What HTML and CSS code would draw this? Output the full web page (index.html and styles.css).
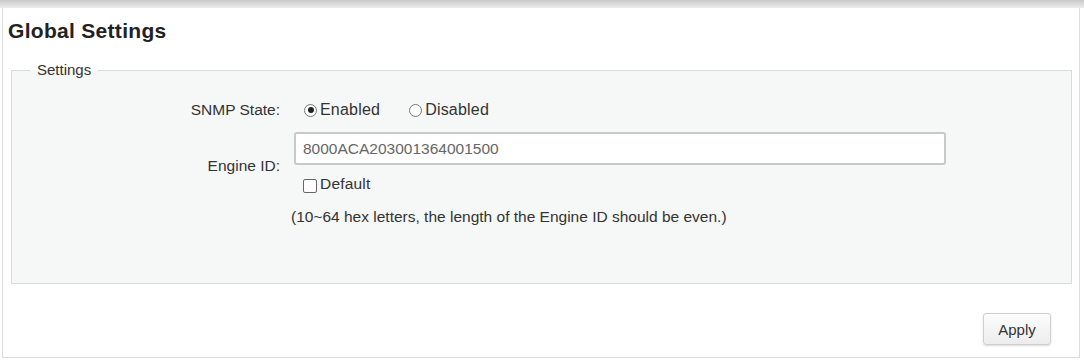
FILE: index.html
```html
<!DOCTYPE html>
<html>
<head>
<meta charset="utf-8">
<link rel="stylesheet" href="styles.css">
</head>
<body>
<div class="shade"></div>
<div class="page">
  <h1 class="title">Global Settings</h1>
  <fieldset class="group">
    <legend class="legend">Settings</legend>
    <div class="row row-state">
      <div class="label">SNMP State:</div>
      <div class="controls">
        <label class="opt"><span class="radio on"></span>Enabled</label>
        <label class="opt"><span class="radio"></span>Disabled</label>
      </div>
    </div>
    <div class="row row-engine">
      <div class="label">Engine ID:</div>
      <div class="controls col">
        <div class="input">8000ACA203001364001500</div>
        <label class="opt chk"><span class="box"></span>Default</label>
      </div>
    </div>
    <div class="row row-hint">
      <div class="label"></div>
      <div class="hint">(10~64 hex letters, the length of the Engine ID should be even.)</div>
    </div>
  </fieldset>
  <div class="actions">
    <div class="btn">Apply</div>
  </div>
</div>
</body>
</html>
```

FILE: styles.css
```css
html, body {
  margin: 0;
  padding: 0;
  background: #ffffff;
  font-family: "Liberation Sans", Arial, sans-serif;
  color: #333;
}
.shade {
  height: 8px;
  background: linear-gradient(#c9c9c9, #ececec);
}
.page {
  margin: 0 4px 0 2px;
  border-left: 1px solid #dcdcdc;
  border-right: 1px solid #dcdcdc;
  border-bottom: 1px solid #dcdcdc;
  height: 350px;
  box-sizing: border-box;
  padding-top: 11px;
}
.title {
  margin: 0 0 0 5px;
  font-size: 21px;
  font-weight: bold;
  color: #222;
  line-height: 24px;
  letter-spacing: 0.3px;
}
.group {
  margin: 18px 7px 0 8px;
  padding: 0;
  border: 1px solid #d8dcdc;
  background: #f6f7f7;
  height: 223px;
  box-sizing: border-box;
}
.legend {
  margin-left: 18px;
  padding: 0 7px;
  font-size: 15px;
  line-height: 18px;
  color: #333;
}
.row {
  display: flex;
  align-items: flex-start;
}
.label {
  width: 268px;
  text-align: right;
  font-size: 15.5px;
  color: #333;
  flex-shrink: 0;
}
.controls {
  display: flex;
  align-items: center;
  font-size: 16px;
}
.controls.col {
  flex-direction: column;
  align-items: flex-start;
  margin-left: 14px;
}
.row-state {
  margin-top: 21px;
  align-items: center;
  height: 20px;
}
.row-state .controls {
  margin-left: 24px;
}
.opt {
  display: flex;
  align-items: center;
  margin-right: 29px;
  color: #333;
  letter-spacing: 0.2px;
}
.radio {
  width: 13px;
  height: 13px;
  border: 1px solid #777;
  border-radius: 50%;
  box-sizing: border-box;
  margin-right: 3px;
  background: #fff;
  position: relative;
}
.radio.on::after {
  content: "";
  position: absolute;
  left: 2.5px;
  top: 2.5px;
  width: 6px;
  height: 6px;
  border-radius: 50%;
  background: #222;
}
.row-engine {
  margin-top: 12px;
  align-items: center;
}
.row-engine .label {
  margin-top: 6px;
}
.input {
  width: 652px;
  height: 33px;
  box-sizing: border-box;
  border: 2px solid #c8c8c8;
  border-radius: 3px;
  background: #fff;
  font-size: 15.5px;
  color: #666;
  line-height: 29px;
  padding-left: 7px;
}
.chk {
  margin-top: 10px;
  margin-left: 9px;
  font-size: 15.5px;
  line-height: 18px;
}
.box {
  width: 14px;
  height: 14px;
  border: 1px solid #666;
  border-radius: 2px;
  box-sizing: border-box;
  margin-right: 3px;
  margin-top: 3px;
  background: #fff;
}
.row-hint {
  margin-top: 15px;
}
.hint {
  margin-left: 11px;
  font-size: 15.5px;
  line-height: 18px;
  color: #333;
}
.actions {
  display: flex;
  justify-content: flex-end;
  padding-right: 28px;
  margin-top: 29px;
}
.btn {
  width: 68px;
  height: 32px;
  box-sizing: border-box;
  border: 1px solid #cfcfcf;
  border-radius: 3px;
  background: linear-gradient(#fdfdfd, #ececec);
  box-shadow: 0 1px 2px rgba(0,0,0,0.15);
  font-size: 15px;
  color: #333;
  display: flex;
  align-items: center;
  justify-content: center;
}
```
